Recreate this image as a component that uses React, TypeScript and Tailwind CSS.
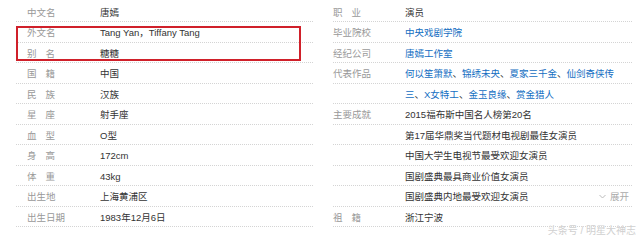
import React from "react";

type Seg = { t: string; link?: boolean };

const LEFT: [string, string][] = [
  ["中文名", "唐嫣"],
  ["外文名", "Tang Yan，Tiffany Tang"],
  ["别名", "糖糖"],
  ["国籍", "中国"],
  ["民族", "汉族"],
  ["星座", "射手座"],
  ["血型", "O型"],
  ["身高", "172cm"],
  ["体重", "43kg"],
  ["出生地", "上海黄浦区"],
  ["出生日期", "1983年12月6日"],
];

const RIGHT: { label: string; value: Seg[]; more?: boolean }[] = [
  { label: "职业", value: [{ t: "演员" }] },
  { label: "毕业院校", value: [{ t: "中央戏剧学院", link: true }] },
  { label: "经纪公司", value: [{ t: "唐嫣工作室", link: true }] },
  {
    label: "代表作品",
    value: [
      { t: "何以笙箫默", link: true },
      { t: "、" },
      { t: "锦绣未央", link: true },
      { t: "、" },
      { t: "夏家三千金", link: true },
      { t: "、" },
      { t: "仙剑奇侠传", link: true },
    ],
  },
  {
    label: "",
    value: [
      { t: "三", link: true },
      { t: "、" },
      { t: "X女特工", link: true },
      { t: "、" },
      { t: "金玉良缘", link: true },
      { t: "、" },
      { t: "赏金猎人", link: true },
    ],
  },
  { label: "主要成就", value: [{ t: "2015福布斯中国名人榜第20名" }] },
  { label: "", value: [{ t: "第17届华鼎奖当代题材电视剧最佳女演员" }] },
  { label: "", value: [{ t: "中国大学生电视节最受欢迎女演员" }] },
  { label: "", value: [{ t: "国剧盛典最具商业价值女演员" }] },
  { label: "", value: [{ t: "国剧盛典内地最受欢迎女演员" }], more: true },
  { label: "祖籍", value: [{ t: "浙江宁波" }] },
];

function Label({ text }: { text: string }) {
  if (text.length === 2) {
    return (
      <span className="flex w-[28px] justify-between">
        <span>{text[0]}</span>
        <span>{text[1]}</span>
      </span>
    );
  }
  return <span>{text}</span>;
}

function Row({
  label,
  children,
  left,
}: {
  label: string;
  children: React.ReactNode;
  left?: boolean;
}) {
  return (
    <div
      className={
        "flex h-[20.5px] items-center border-b border-dotted border-[#d4d4d4] pt-[2px] " +
        (left ? "pl-[11px]" : "")
      }
    >
      <div className={"shrink-0 text-[#999] " + (left ? "w-[73px]" : "w-[72px]")}>
        <Label text={label} />
      </div>
      <div className="flex flex-1 items-center whitespace-nowrap text-[#333]">
        {children}
      </div>
    </div>
  );
}

export default function App() {
  return (
    <div
      className="relative h-[241px] w-[640px] overflow-hidden bg-white text-[9.5px] leading-none"
      style={{ fontFamily: '"Liberation Sans", "Noto Sans CJK SC", sans-serif' }}
    >
      <div className="flex pt-[1.5px]">
        <div className="ml-[16px] w-[297px]">
          {LEFT.map(([l, v]) => (
            <Row key={l} label={l} left>
              {v}
            </Row>
          ))}
        </div>
        <div className="ml-[20px] w-[299px]">
          {RIGHT.map((r, i) => (
            <Row key={i} label={r.label}>
              {r.value.map((s, j) => (
                <span key={j} className={s.link ? "text-[#136ec2]" : ""}>
                  {s.t}
                </span>
              ))}
              {r.more && (
                <span className="ml-auto mr-[3px] flex items-center gap-[4px] text-[#aaa]">
                  <svg width="7" height="5" viewBox="0 0 7 5">
                    <polyline points="0.5,1 3.5,4 6.5,1" fill="none" stroke="#bbb" strokeWidth="1" />
                  </svg>
                  展开
                </span>
              )}
            </Row>
          ))}
        </div>
      </div>

      <div className="pointer-events-none absolute left-[16px] top-[26px] h-[35px] w-[285px] border-2 border-[#d0202a]" />

      <div className="absolute right-[4px] top-[226px] text-[10px] text-[#d0d0d0] [text-shadow:0_0_1px_#fff]">
        头条号 / 明星大神志
      </div>
    </div>
  );
}
